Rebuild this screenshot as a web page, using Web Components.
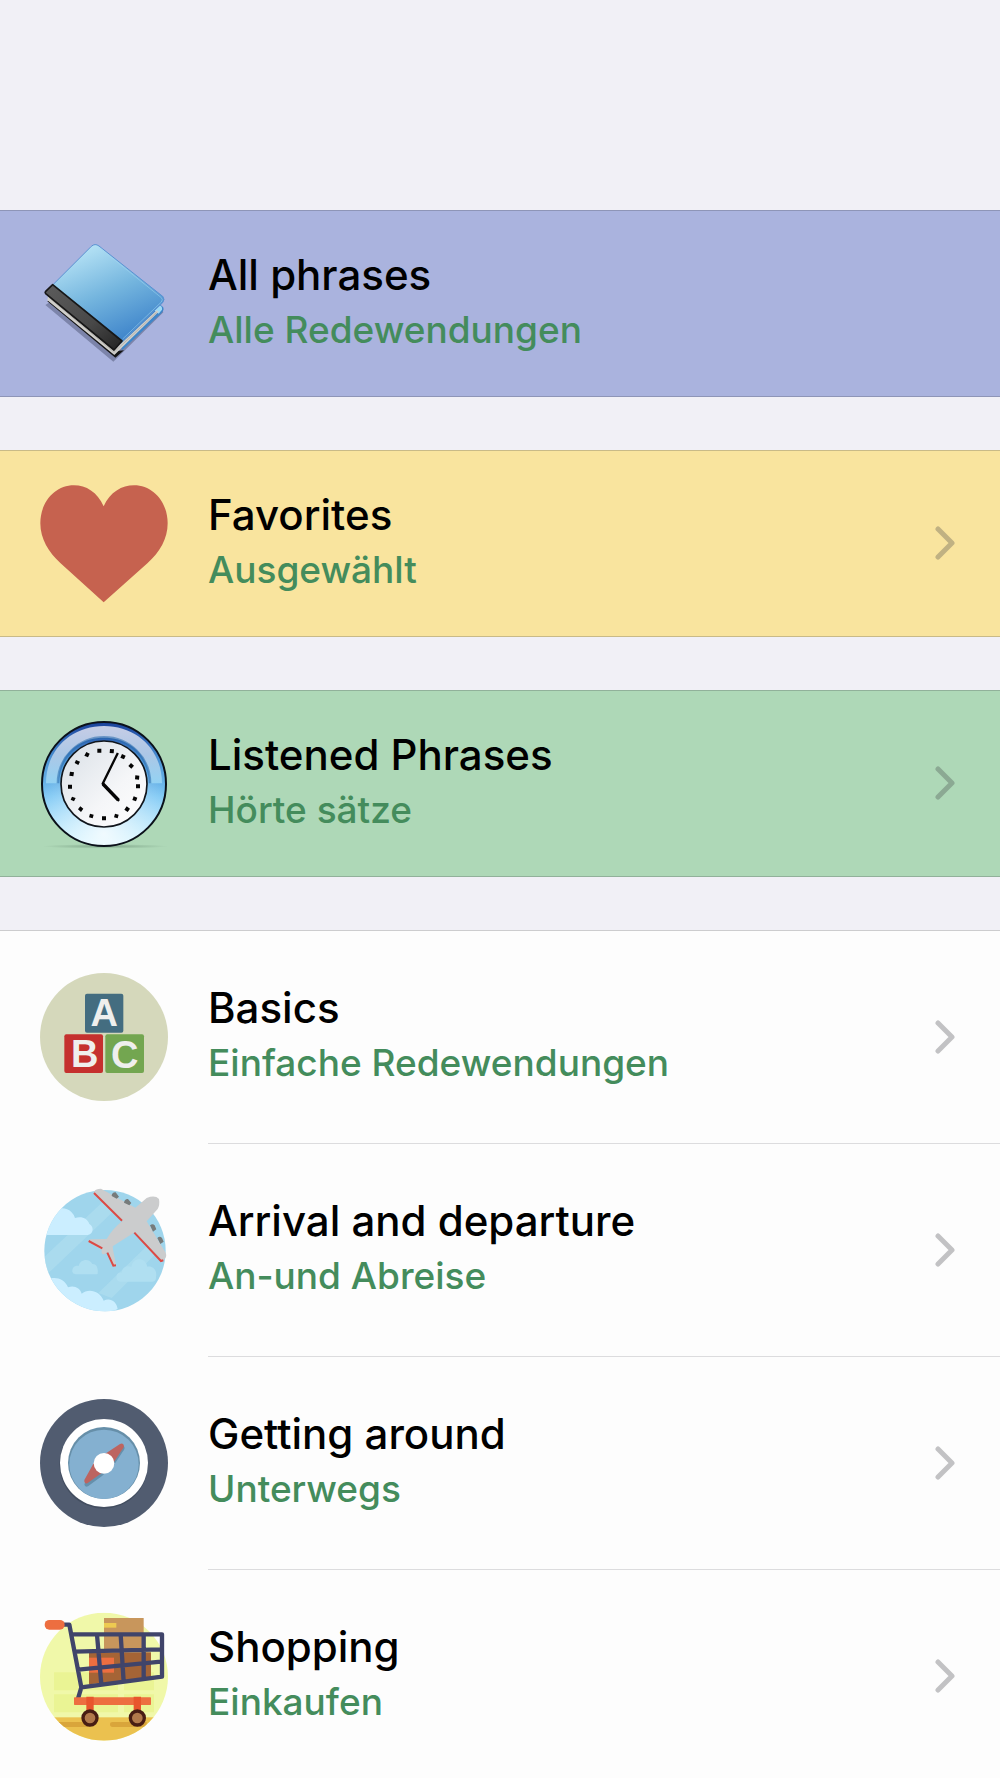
<!DOCTYPE html>
<html lang="en">
<head>
<meta charset="utf-8">
<meta name="viewport" content="width=device-width, initial-scale=1">
<title>Phrasebook</title>
<style>
  body { margin: 0; background: #f1f0f6; font-family: Inter, "Liberation Sans", sans-serif; }
  svg { display: block; width: 100%; height: 100%; overflow: visible; }
</style>
</head>
<body>
<phrase-book>
  <phrase-section tone="blue">
    <phrase-row label="All phrases" translation="Alle Redewendungen" plain>
      <svg viewBox="30 29 384 384" aria-hidden="true">
        <defs>
          <linearGradient id="cover" x1="0.25" y1="0.05" x2="0.7" y2="0.95"><stop offset="0" stop-color="#b5e2f5"/><stop offset="0.5" stop-color="#74b5de"/><stop offset="1" stop-color="#3f85cb"/></linearGradient>
          <linearGradient id="spine" x1="0" y1="0" x2="1" y2="1"><stop offset="0" stop-color="#5c5c5c"/><stop offset="0.6" stop-color="#484848"/><stop offset="1" stop-color="#222"/></linearGradient>
        </defs>
        <path d="M46 224L250 394L400 246L392 230L250 370L60 215Z" fill="#646b8e" opacity="0.65"/>
        <path d="M52 213L62 206L262 362L282 360L256 382Z" fill="#151515"/>
        <path d="M272 334L385 226Q397 222 401 236Q400 243 394 249L276 360Z" fill="#3f86c9"/>
        <path d="M370 238L386 226Q398 225 396 238L386 250Z" fill="#9edaf5"/>
        <path d="M54 198L252 360L380 240L386 244L253 374L52 210Z" fill="#d0cfcb"/>
        <path d="M58 203L252 366L380 246" fill="none" stroke="#aaa7a2" stroke-width="2"/>
        <path d="M184 48Q195 38 207 47L398 198Q406 207 398 217L276 334L68 164Z" fill="url(#cover)" stroke="#5a91d2" stroke-width="3"/>
        <path d="M208 52L394 202Q400 208 394 215L278 326" fill="none" stroke="#a5d9f3" stroke-width="2" opacity="0.75"/>
        <path d="M47 183L68 163L276 332L252 359L47 190Q44 187 47 183Z" fill="url(#spine)" stroke="#171717" stroke-width="5" stroke-linejoin="round"/>
      </svg>
    </phrase-row>
  </phrase-section>

  <phrase-section tone="yellow">
    <phrase-row label="Favorites" translation="Ausgewählt">
      <svg viewBox="30 29 384 384" aria-hidden="true">
        <path d="M221 108C202 65 168 45 132 45C74 45 31 96 31 159C31 205 56 247 91 278L221 396L353 278C389 247 413 205 413 159C413 96 370 45 312 45C276 45 240 65 221 108Z" fill="#c6624f"/>
      </svg>
    </phrase-row>
  </phrase-section>

  <phrase-section tone="green">
    <phrase-row label="Listened Phrases" translation="Hörte sätze">
      <svg viewBox="30 29 384 384" aria-hidden="true">
        <defs>
          <linearGradient id="rim" x1="0" y1="0" x2="0" y2="1"><stop offset="0" stop-color="#1a419b"/><stop offset="0.3" stop-color="#4c93d4"/><stop offset="0.6" stop-color="#79c6f4"/><stop offset="1" stop-color="#c9f3ff"/></linearGradient>
          <radialGradient id="glow" cx="0.5" cy="0.9" r="0.62"><stop offset="0" stop-color="#fff" stop-opacity="0.8"/><stop offset="1" stop-color="#fff" stop-opacity="0"/></radialGradient>
          <linearGradient id="gloss" x1="0" y1="0" x2="0" y2="1"><stop offset="0" stop-color="#c6cde6"/><stop offset="0.5" stop-color="#acc7e6"/><stop offset="1" stop-color="#93d2f3"/></linearGradient>
          <linearGradient id="dial" x1="0" y1="0" x2="1" y2="1"><stop offset="0" stop-color="#d8dfe6"/><stop offset="0.6" stop-color="#f5f6f8"/><stop offset="1" stop-color="#fff"/></linearGradient>
          <radialGradient id="floor"><stop offset="0" stop-color="#6f947a" stop-opacity="0.7"/><stop offset="1" stop-color="#6f947a" stop-opacity="0"/></radialGradient>
        </defs>
        <ellipse cx="226" cy="408" rx="190" ry="7" fill="url(#floor)"/>
        <circle cx="222" cy="221" r="186" fill="url(#rim)"/>
        <circle cx="222" cy="221" r="186" fill="url(#glow)"/>
        <path d="M48 219C48 118 124 47 222 47S396 118 396 219H360C360 137 301 82 222 82S84 137 84 219Z" fill="url(#gloss)"/>
        <circle cx="222" cy="221" r="186" fill="none" stroke="#0b111a" stroke-width="6"/>
        <path d="M84 219A138 138 0 0 1 360 219" fill="none" stroke="#2869ac" stroke-width="8" opacity="0.55"/>
        <circle cx="222" cy="221" r="129" fill="url(#dial)" stroke="#11161c" stroke-width="5"/>
        <g fill="#050505">
          <path d="M202 115h12v12h-12zM240 116l12 1-1 12-12-1zM276 131l11 5-5 11-11-5zM303 158l9 8-8 9-9-8zM316 195l12 1-1 12-12-1zM318 222h12v12h-12zM311 258l11 4-4 11-11-4zM290 288l10 7-7 10-10-7zM255 310l11 3-3 11-11-3zM216 318h12v12h-12zM180 310l11 3-3 11-11-3zM151 288l9 7-7 10-9-8zM126 259l11 4-5 10-10-5zM114 223h12v12h-12zM120 184l12 2-2 12-12-2zM138 149l12 5-5 10-11-6zM169 125l10 5-5 11-11-5z"/>
        </g>
        <path d="M262 131L218 220L265 269" fill="none" stroke="#050505" stroke-width="7" stroke-linecap="square" stroke-linejoin="round"/>
        <path d="M219 221L265 269" stroke="#050505" stroke-width="10"/>
      </svg>
    </phrase-row>
  </phrase-section>

  <phrase-section tone="list">
    <phrase-row label="Basics" translation="Einfache Redewendungen">
      <svg viewBox="30 42 384 384" aria-hidden="true">
        <circle cx="222" cy="231" r="192" fill="#d5d8bb"/>
        <rect x="165" y="101" width="115" height="117" rx="6" fill="#446d80"/>
        <rect x="103" y="223" width="116" height="116" rx="6" fill="#c5302e"/>
        <rect x="226" y="223" width="116" height="116" rx="6" fill="#73a650"/>
        <g fill="#efefed" font-family="Liberation Sans, sans-serif" font-weight="700" font-size="114" text-anchor="middle">
          <text x="223" y="197">A</text><text x="164" y="321">B</text><text x="284" y="324">C</text>
        </g>
      </svg>
    </phrase-row>
    <phrase-row label="Arrival and departure" translation="An-und Abreise">
      <svg viewBox="30 37 384 384" aria-hidden="true">
        <defs><clipPath id="sky"><circle cx="225" cy="228" r="182"/></clipPath></defs>
        <g clip-path="url(#sky)">
          <rect x="40" y="40" width="375" height="375" fill="#9fd5ec"/>
          <path d="M40 250L225 75L255 105L40 310ZM205 355L360 205L385 230L245 370Z" fill="#b3e0f1" opacity="0.55"/>
          <path d="M40 181V118Q62 122 68 115C78 99 107 95 124 112Q134 122 135 130C155 123 173 132 178 148C191 154 193 177 173 181Z" fill="#cbeeff"/>
          <path d="M127 291C126 278 136 272 146 274C149 255 177 248 187 268C200 267 205 280 203 297Q201 299 196 299H137Q128 298 127 291ZM260 311C257 300 265 291 276 294C275 278 291 270 304 277C309 247 345 246 352 276C370 272 382 289 378 306Q379 320 368 321H270Q260 320 260 311Z" fill="#b0dff1"/>
          <path d="M40 322C63 303 101 306 114 338C132 330 151 340 155 357C174 340 210 347 221 378C240 368 260 380 263 403L225 420L40 415Z" fill="#cbeeff"/>
        </g>
        <path d="M191 53Q194 43 213 42L316 99L350 70Q375 60 387 73Q390 91 383 103L350 140L407 234Q414 250 396 258L314 173L248 215Q249 220 249 225L258 270Q257 279 248 273L233 233L225 237Q213 244 215 225L177 203Q174 193 184 194L230 193Q247 163 277 139Z" fill="#cbcccd"/>
        <path d="M245 64Q246 52 257 53L267 66L260 72ZM282 84Q284 72 294 73L304 85L298 92ZM360 152Q368 145 374 152L379 164L369 171ZM382 190Q390 183 396 190L401 201L391 208Z" fill="#777b7b"/>
        <path d="M192 55L276 138M313 174L393 259L400 257M176 199L217 221M232 234L250 273L258 272" fill="none" stroke="#dc4a45" stroke-width="6"/>
      </svg>
    </phrase-row>
    <phrase-row label="Getting around" translation="Unterwegs">
      <svg viewBox="30 30 384 384" aria-hidden="true">
        <circle cx="222" cy="219" r="192" fill="#515c70"/>
        <circle cx="221" cy="223" r="133" fill="#434e60"/>
        <circle cx="222" cy="219" r="132" fill="#fff"/>
        <circle cx="222" cy="219" r="108" fill="#668fa9"/>
        <circle cx="222" cy="223" r="104" fill="#84b0d0"/>
        <path d="M228 196L272 168Q282 164 284 174Q283 180 278 185L250 228L216 258L174 289Q164 293 163 282Z" fill="#6590ac"/>
        <path d="M228 190L270 162Q280 158 282 168Q281 174 276 179L248 222L214 250L172 280Q162 282 163 270L193 216Z" fill="#bd6460"/>
        <circle cx="222" cy="220" r="31" fill="#fff"/>
      </svg>
    </phrase-row>
    <phrase-row label="Shopping" translation="Einkaufen">
      <svg viewBox="30 39 384 384" aria-hidden="true">
        <defs><clipPath id="store"><circle cx="222" cy="230" r="192"/></clipPath></defs>
        <g clip-path="url(#store)">
          <rect x="30" y="38" width="384" height="384" fill="#f0f8a9"/>
          <path d="M72 217H264V271H72ZM282 217H372V271H282ZM72 283H264V337H72ZM282 283H372V337H282Z" fill="#eaf494"/>
          <rect x="30" y="352" width="384" height="70" fill="#ebc14f"/>
          <path d="M60 366H180V381H60ZM248 366H350V381H248Q240 381 240 373Q240 366 248 366Z" fill="#d9a53b"/>
        </g>
        <rect x="222" y="54" width="119" height="104" fill="#c8965c"/>
        <rect x="222" y="69" width="37" height="14" fill="#edca51"/>
        <path d="M177 157H363V236L177 253Z" fill="#a56436"/>
        <rect x="177" y="173" width="75" height="45" fill="#ed6e40"/>
        <path d="M222 142H341V158H222Z" fill="#c8965c"/>
        <g fill="none" stroke="#40446a" stroke-width="13" stroke-linejoin="round">
          <path d="M99 74H118L154 262L144 296M122 103H396V230L154 262M134 155L393 148M145 209L393 185M201 104L214 253M272 104L281 246M341 104V238"/>
        </g>
        <rect x="44" y="60" width="60" height="29" rx="14" fill="#ed6e40"/>
        <rect x="132" y="292" width="231" height="23" rx="2" fill="#ed6e40"/>
        <path d="M169 290H191V336H169ZM311 290H333V336H311Z" fill="#e8552d"/>
        <g fill="#b1794b" stroke="#481d13" stroke-width="10"><circle cx="180" cy="354" r="21"/><circle cx="322" cy="354" r="21"/></g>
      </svg>
    </phrase-row>
  </phrase-section>
</phrase-book>

<script>
class PhraseBook extends HTMLElement {
  constructor() {
    super();
    this.attachShadow({ mode: "open" }).innerHTML = `
      <style>
        :host { display: block; height: 100vh; overflow-y: auto; scrollbar-width: none; background: #f1f0f6; }
        main { display: flex; flex-direction: column; gap: 53px; padding-top: 210px; }
      </style>
      <main><slot></slot></main>`;
  }
}

class PhraseSection extends HTMLElement {
  constructor() {
    super();
    this.attachShadow({ mode: "open" }).innerHTML = `
      <style>
        :host { display: block; box-sizing: border-box; --row-height: 185px; --text-lift: 2px; --divider: transparent;
          border-top: 1px solid rgba(60, 60, 67, 0.25); border-bottom: 1px solid rgba(60, 60, 67, 0.25); }
        :host([tone="blue"]) { background: #aab3de; }
        :host([tone="yellow"]) { background: #f9e49e; }
        :host([tone="green"]) { background: #aed8b7; }
        :host([tone="list"]) { background: #fdfdfd; --row-height: 213px; --text-lift: 4px; --divider: #dcdcde; }
      </style>
      <slot></slot>`;
  }
}

class PhraseRow extends HTMLElement {
  connectedCallback() {
    if (this.shadowRoot) return;
    this.attachShadow({ mode: "open" }).innerHTML = `
      <style>
        :host { display: block; }
        a { display: flex; align-items: stretch; gap: 40px; height: var(--row-height);
          padding-left: 40px; color: #000; text-decoration: none; }
        .icon { flex: none; align-self: center; width: 128px; height: 128px; }
        .body { flex: 1; min-width: 0; display: flex; align-items: center; gap: 24px; box-sizing: border-box;
          padding-right: 45px; border-bottom: 1px solid var(--divider); }
        .text { flex: 1; min-width: 0; display: flex; flex-direction: column; padding-bottom: var(--text-lift); }
        .title { font-size: 42px; line-height: 56px; font-weight: 500; }
        .sub { font-size: 37px; line-height: 54px; font-weight: 500; color: #448c5c; }
        .chevron { flex: none; width: 20px; height: 34px; fill: none; stroke: rgba(60, 60, 67, 0.3);
          stroke-width: 5; stroke-linecap: round; stroke-linejoin: round; }
      </style>
      <a href="#">
        <span class="icon"><slot></slot></span>
        <span class="body">
          <span class="text"><span class="title"></span><span class="sub" lang="de"></span></span>
          ${this.hasAttribute("plain") ? "" : '<svg class="chevron" viewBox="0 0 20 34" aria-hidden="true"><path d="M3 3L17 17L3 31"/></svg>'}
        </span>
      </a>`;
    this.shadowRoot.querySelector(".title").textContent = this.getAttribute("label");
    this.shadowRoot.querySelector(".sub").textContent = this.getAttribute("translation");
  }
}

customElements.define("phrase-book", PhraseBook);
customElements.define("phrase-section", PhraseSection);
customElements.define("phrase-row", PhraseRow);
</script>
</body>
</html>
